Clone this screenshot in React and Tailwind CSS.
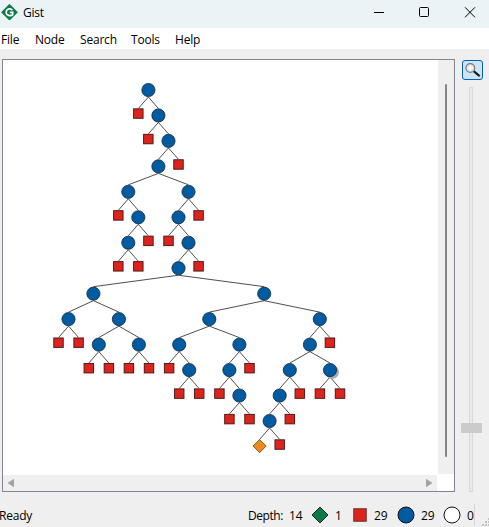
import React from 'react';

// Internal node: [x, left, right]; a number is a failed leaf; an object is the best solution leaf.
const S = { solution: 259.6 };
const tree = [148.4, 138.3, [158.4, 148.3, [168.5,
  [158.4,
    [128.3, 118.3, [138.3, [128.3, 118.3, 138.3], 148.4]],
    [188.5, [178.5, 168.5, [188.5,
      [178.5,
        [93.4, [68.5, 58.5, 78.6], [118.9, [98.8, 88.8, 108.9], [138.9, 128.9, 149]]],
        [264.2,
          [209.3, [179.2, 169.1, [189.2, 179.2, 199.2]], [239.4, [229.4, 219.4, [239.4, 229.4, 249.5]], 249.5]],
          [319.8, [309.9, [289.8, [279.7, [269.6, S, 279.7], 289.8], 299.8], [330, 319.9, 340]], 329.9]]],
      198.6]], 198.6]],
  178.5]]];

const levelY = (d) => 90 + d * 25.46;
const nodeX = (n) => (Array.isArray(n) ? n[0] : typeof n === 'number' ? n : n.solution);

function collect(n, d = 0, out = { lines: [], nodes: [] }) {
  const x = nodeX(n);
  const y = levelY(d);
  if (Array.isArray(n)) {
    out.nodes.push({ type: 'choice', x, y, shadow: x === 330 });
    for (const c of n.slice(1)) {
      out.lines.push([x, y + 7, nodeX(c), y + 25.46 - 7]);
      collect(c, d + 1, out);
    }
  } else out.nodes.push({ type: typeof n === 'number' ? 'fail' : 'best', x, y });
  return out;
}

const { lines, nodes } = collect(tree);

function SearchTree() {
  return (
    <svg className="block h-[414px] w-[434px]" viewBox="3 60 434 414">
      {lines.map(([x1, y1, x2, y2], i) => (
        <line key={i} x1={x1} y1={y1} x2={x2} y2={y2} stroke="#222" strokeWidth="0.8" />
      ))}
      {nodes.map(({ type, x, y, shadow }, i) => {
        if (type === 'choice')
          return (
            <g key={i}>
              {shadow && <circle cx={x + 2} cy={y + 2} r="7" fill="#aaaab4" />}
              <circle cx={x} cy={y} r="6.6" fill="#005ba1" stroke="#13293d" strokeWidth="0.8" />
            </g>
          );
        if (type === 'fail')
          return (
            <g key={i}>
              <rect x={x - 5.3} y={y - 7.2} width="10.8" height="10.8" fill="#d8d0d0" />
              <rect x={x - 4.7} y={y - 6.6} width="9.4" height="9.4" fill="#dc241c" stroke="#4e1714" strokeWidth="0.9" />
            </g>
          );
        return (
          <path key={i} d={`M${x} ${y - 7}l6.6 6.6l-6.6 6.6l-6.6-6.6z`} fill="#ee8a1b" stroke="#614426" strokeWidth="0.8" />
        );
      })}
    </svg>
  );
}

function TitleBar() {
  return (
    <header className="flex h-7 shrink-0 items-center bg-[#ebf3f7]">
      <svg className="ml-px h-[17px] w-[17px] self-start mt-[4px]" viewBox="0 0 17 17">
        <path d="M8.5 0.3L16.4 8.2L8.5 16.1L0.6 8.2z" fill="#087a48" stroke="#087a48" strokeLinejoin="round" />
        <path d="M11.5 6.2C9.7 3.8 5.2 4.7 5.2 8.2C5.2 11.6 9.5 12.5 11.7 10.6V8.4H8.8" fill="none" stroke="#fff" strokeWidth="1.6" />
      </svg>
      <span className="ml-[5px] mt-[-2px] w-[40px]">Gist</span>
      <svg className="ml-auto h-7 w-[126px]" viewBox="363 0 126 28" fill="none" stroke="#000">
        <path d="M374 12.5h10" />
        <rect x="419.5" y="7.5" width="9" height="9" rx="1" />
        <path d="M465 7.3l10 10M475 7.3l-10 10" />
      </svg>
    </header>
  );
}

function MenuBar() {
  return (
    <nav className="flex h-[21px] shrink-0 items-center bg-white pt-[2px]">
      <span className="ml-px w-[34px]">File</span>
      <span className="w-[45px]">Node</span>
      <span className="w-[51px]">Search</span>
      <span className="w-[44px]">Tools</span>
      <span>Help</span>
    </nav>
  );
}

function TreeView() {
  return (
    <main className="grid h-[433px] w-[453px] grid-cols-[434px_17px] grid-rows-[414px_17px] border border-[#82858f] bg-white">
      <SearchTree />
      <div className="ml-px flex w-4 justify-center bg-[#efefef] pt-6">
        <div className="mr-px h-[373px] w-[2px] rounded-full bg-[#858585]" />
      </div>
      <div className="mt-px flex h-4 items-center justify-between bg-[#efefef] px-[5px]">
        <svg className="h-2 w-[6px]" viewBox="0 0 6 8"><path d="M6 0v8L0 4z" fill="#a2a2a2" stroke="#a2a2a2" strokeWidth=".5" /></svg>
        <svg className="h-2 w-[6px]" viewBox="0 0 6 8"><path d="M0 0v8l6-4z" fill="#a2a2a2" stroke="#a2a2a2" strokeWidth=".5" /></svg>
      </div>
    </main>
  );
}

function ZoomPanel() {
  return (
    <aside className="flex flex-col pl-[6px] pt-px">
      <div className="ml-px flex h-5 w-[21px] items-center justify-center rounded-[3px] border border-[#0560a8] bg-[#cce4f7]">
        <svg className="h-[16px] w-[17px] shrink-0" viewBox="0 0 17 16">
          <path d="M10 9.5l6 5" stroke="#aaa" strokeWidth="2.5" />
          <path d="M9.5 9l6 5" stroke="#111" strokeWidth="1.8" />
          <circle cx="6.3" cy="6" r="4.4" fill="#ddd" stroke="#777" strokeWidth="1.1" />
          <path d="M6.3 3.3v5.4M3.6 6h5.4" stroke="#fff" strokeWidth="1.7" />
        </svg>
      </div>
      <div className="mt-[7px] flex h-[405px] w-[21px] flex-col">
        <div className="ml-2 h-[336px] w-1 border border-b-0 border-[#d5d9d8] bg-[#e9ebeb]" />
        <div className="h-[10px] w-[21px] shrink-0 bg-[#cbcbcb]" />
        <div className="ml-2 h-[59px] w-1 border border-t-0 border-[#d5d9d8] bg-[#e9ebeb]" />
      </div>
    </aside>
  );
}

function StatusBar() {
  return (
    <footer className="flex h-[35px] shrink-0 items-center pt-[13px] *:shrink-0">
      <span className="-mt-px -ml-px w-[249px]">Ready</span>
      <span className="-mt-px w-[41px] tracking-[-0.45px]">Depth:</span>
      <span className="-mt-px w-[22px]">14</span>
      <svg className="-mt-[3px] h-[18px] w-[18px]" viewBox="0 0 18 18"><path d="M9 1l8 8-8 8-8-8z" fill="#0b7a46" stroke="#102d1f" /></svg>
      <span className="ml-[6px] -mt-px w-[18px]">1</span>
      <svg className="-mt-[3px] h-[14px] w-[14px]" viewBox="0 0 14 14"><rect x=".75" y=".75" width="12.5" height="12.5" fill="#dc241c" stroke="#6e332f" /></svg>
      <span className="ml-[7px] -mt-px w-[23px]">29</span>
      <svg className="-mt-[3px] h-[18px] w-[18px]" viewBox="0 0 18 18"><circle cx="9" cy="9" r="8" fill="#005ba1" stroke="#111" /></svg>
      <span className="ml-[6px] -mt-px w-[22px]">29</span>
      <svg className="-mt-[3px] h-[18px] w-[18px]" viewBox="0 0 18 18"><circle cx="9" cy="9" r="8" fill="#fff" stroke="#111" /></svg>
      <span className="ml-[6px] -mt-px w-[7px]">0</span>
      <span className="-mt-[2px] h-[22px] w-px bg-[#d6d6d6]" />
      <svg className="ml-[7px] mt-[13px] h-[8px] w-[8px] self-start" viewBox="0 0 8 8" fill="#c2c2c2">
        <path d="M6 0h2v2h-2zM3 3h2v2h-2zM6 3h2v2h-2zM0 6h2v2h-2zM3 6h2v2h-2zM6 6h2v2h-2z" />
      </svg>
    </footer>
  );
}

export default function App() {
  return (
    <div className="flex h-[527px] w-[489px] flex-col overflow-hidden whitespace-nowrap bg-[#efefef] font-['Open_Sans','Noto_Sans',sans-serif] text-[12px] leading-4 tracking-[-0.2px] text-black">
      <TitleBar />
      <MenuBar />
      <div className="flex h-[443px] shrink-0 items-start pl-[2px] pt-[10px]">
        <TreeView />
        <ZoomPanel />
      </div>
      <StatusBar />
    </div>
  );
}
